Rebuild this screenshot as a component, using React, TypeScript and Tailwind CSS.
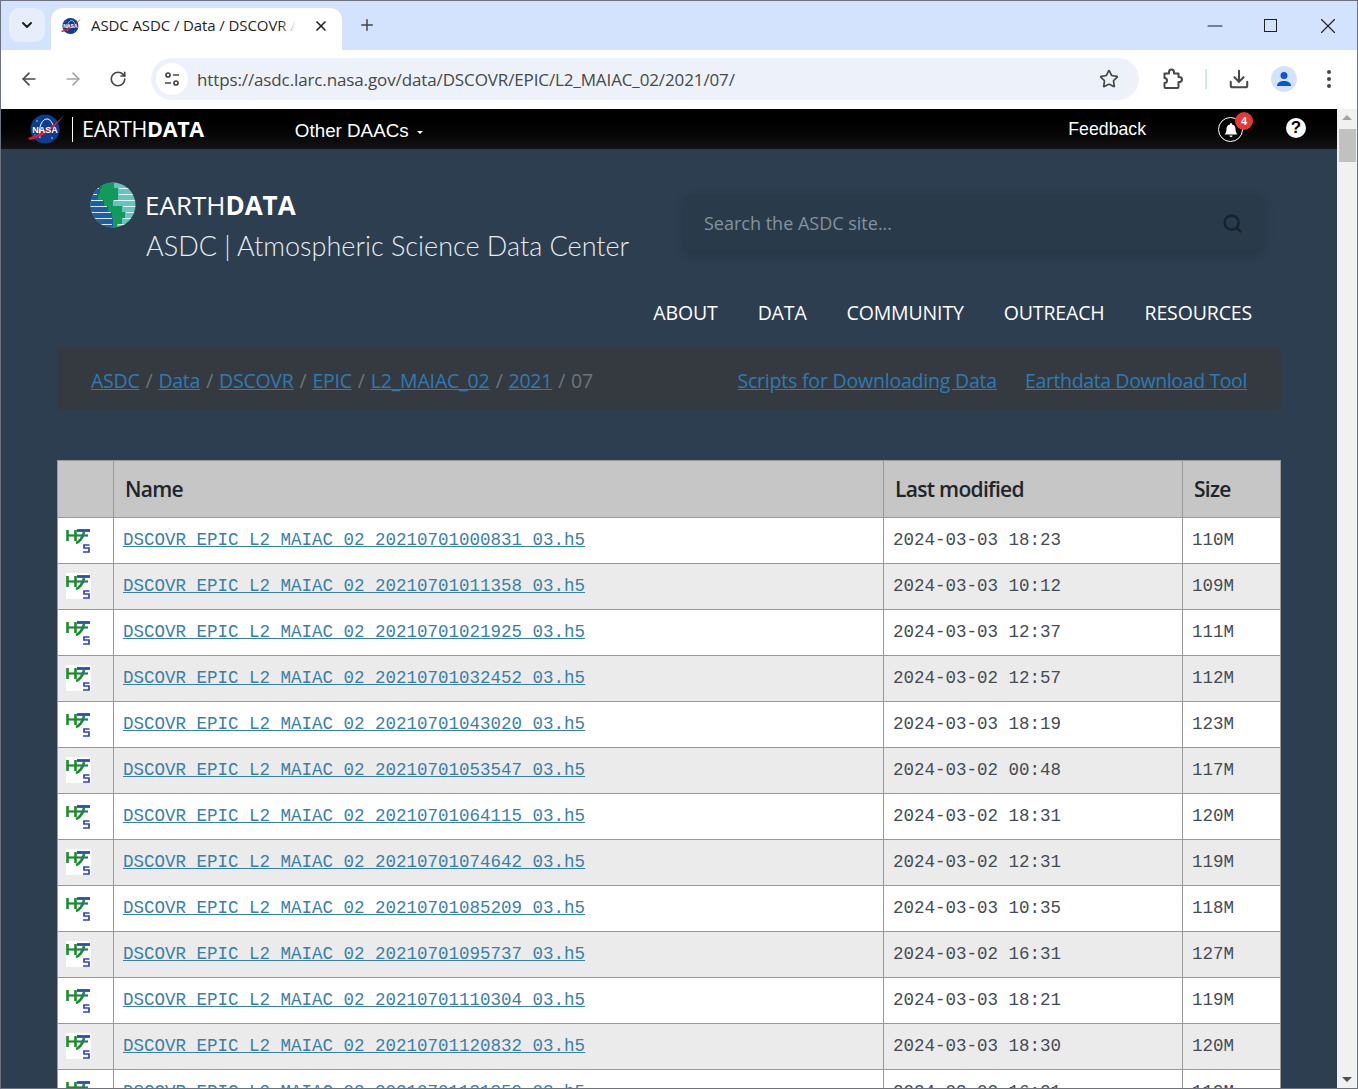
import React from "react";
import { ArrowLeft, ArrowRight, RotateCw, Star, Download, Plus, X, Minus, ChevronDown, Search } from "lucide-react";

const rows: [string, string, string][] = [
  ["20210701000831", "2024-03-03 18:23", "110M"],
  ["20210701011358", "2024-03-03 10:12", "109M"],
  ["20210701021925", "2024-03-03 12:37", "111M"],
  ["20210701032452", "2024-03-02 12:57", "112M"],
  ["20210701043020", "2024-03-03 18:19", "123M"],
  ["20210701053547", "2024-03-02 00:48", "117M"],
  ["20210701064115", "2024-03-02 18:31", "120M"],
  ["20210701074642", "2024-03-02 12:31", "119M"],
  ["20210701085209", "2024-03-03 10:35", "118M"],
  ["20210701095737", "2024-03-02 16:31", "127M"],
  ["20210701110304", "2024-03-03 18:21", "119M"],
  ["20210701120832", "2024-03-03 18:30", "120M"],
  ["20210701131359", "2024-03-02 16:21", "119M"],
];

const sans = "font-['Open_Sans','Noto_Sans',sans-serif]";

function NasaLogo({ size }: { size: number }) {
  return (
    <svg width={size} height={size} viewBox="0 0 36 32" className="shrink-0 overflow-visible">
      <circle cx="17" cy="16" r="14.5" fill="#0b3d91" />
      <circle cx="9" cy="8" r="0.7" fill="#fff" />
      <circle cx="24" cy="25" r="0.7" fill="#fff" />
      <circle cx="7" cy="22" r="0.6" fill="#fff" />
      <path d="M12 25C10 14 14 5 20 6c3 1 4 4 6 8" fill="none" stroke="#fff" strokeWidth="1" />
      <path d="M0 25C13 21 26 13 36 2C28 14 16 24 2 27Z" fill="#d5202e" />
      <text x="17" y="19.500" textAnchor="middle" fontSize="9" fontWeight="700" fill="#fff" fontFamily="Liberation Sans, sans-serif">NASA</text>
    </svg>
  );
}

function EarthLogo() {
  const bands: [number, number, number][] = [
    [0, 12, 24], [6, 10, 28], [12, 8, 28], [18, 14, 23], [24, 18, 32], [30, 22, 35], [36, 23, 32], [42, 23, 27],
  ];
  return (
    <svg width="46" height="46" viewBox="0 0 46 46" className="shrink-0">
      <defs>
        <clipPath id="globe"><circle cx="23" cy="23" r="22.5" /></clipPath>
      </defs>
      <g clipPath="url(#globe)">
        <rect width="46" height="46" fill="#66c3c0" />
        {bands.map(([y, a, b]) => (
          <g key={y}>
            <rect x="0" y={y} width={a} height="6" fill="#1b5ea6" />
            <rect x={a} y={y} width={b - a} height="6" fill="#129a5b" />
            <rect x="0" y={y} width={a - 1} height="1" fill="#fff" opacity="0.85" />
            <rect x={b + 1} y={y} width={46 - b} height="1" fill="#fff" opacity="0.85" />
          </g>
        ))}
      </g>
    </svg>
  );
}

function HdfIcon({ white }: { white: boolean }) {
  return (
    <svg width="25" height="26" viewBox="0 0 25 26" className={white ? "block bg-white mb-[2px]" : "block mb-[2px]"}>
      <path d="M1.500 3v11M9.500 3v11" fill="none" stroke="#1e8a2e" strokeWidth="2.600" />
      <path d="M11 3.500h13" fill="none" stroke="#2a4fa8" strokeWidth="2.800" />
      <path d="M1 8.500h13" fill="none" stroke="#1e8a2e" strokeWidth="2.200" />
      <path d="M14 8.500h8" fill="none" stroke="#2f6aa0" strokeWidth="2.200" />
      <path d="M18 5C17 11 13 15 10 16" fill="none" stroke="#1e8a2e" strokeWidth="2.600" />
      <path d="M23.500 18H18v3h5v4h-6" fill="none" stroke="#3344bb" strokeWidth="1.700" />
    </svg>
  );
}

function Puzzle() {
  return (
    <svg width="22" height="22" viewBox="0 0 22 22" fill="none" stroke="#474747" strokeWidth="2" strokeLinejoin="round">
      <path d="M2.500 5.500H7V4a2.500 2.500 0 0 1 5 0v1.500h4.500V9h1a2.500 2.500 0 0 1 0 5h-1v5a1 1 0 0 1-1 1h-12a1 1 0 0 1-1-1v-4a2.500 2.500 0 0 0 0-5Z" />
    </svg>
  );
}

function Bell() {
  return (
    <div className="relative w-[25px] h-[25px] rounded-full border border-white flex items-center justify-center">
      <svg width="16" height="16" viewBox="0 0 16 16" fill="#fff">
        <path d="M8 1a1 1 0 0 1 1 1v.6A4.500 4.500 0 0 1 12.500 7c0 3 1 4.500 2 5.500H1.500c1-1 2-2.500 2-5.500A4.500 4.500 0 0 1 7 2.600V2a1 1 0 0 1 1-1ZM6.500 13.500h3a1.500 1.500 0 0 1-3 0Z" />
      </svg>
      <span className="absolute -top-[6px] left-[16px] w-[18px] h-[18px] rounded-full bg-[#e53935] text-white text-[11px] leading-[18px] text-center font-['Liberation_Sans',sans-serif] font-bold">4</span>
    </div>
  );
}

export default function App() {
  return (
    <div className={`w-[1358px] h-[1089px] overflow-hidden flex flex-col border border-[#6c7280] bg-white ${sans}`}>
      {/* Tab strip */}
      <div className="h-[49px] shrink-0 bg-[#d3e3fd] flex items-start relative">
        <div className="ml-[8px] mt-[7px] w-[36px] h-[34px] rounded-[10px] bg-[#e6eefb] flex items-center justify-center">
          <ChevronDown size={16} strokeWidth={3} color="#1f1f1f" />
        </div>
        <div className="ml-[6px] mt-[7px] w-[291px] h-[42px] bg-white rounded-t-[12px] flex items-center pl-[10px] pb-[7px] relative">
          <NasaLogo size={20} />
          <div className="ml-[10px] w-[205px] relative overflow-hidden">
            <span className="block whitespace-nowrap text-[15px] text-[#1f1f1f] tracking-[-0.1px]">ASDC ASDC / Data / DSCOVR /</span>
            <div className="absolute right-0 top-0 bottom-0 w-[16px] bg-gradient-to-l from-white to-transparent" />
          </div>
          <X size={16} strokeWidth={2.5} color="#1f1f1f" className="ml-[17px]" />
        </div>
        <Plus size={18} strokeWidth={2} color="#444" className="ml-[16px] mt-[15px]" />
        <div className="ml-auto flex items-center h-[49px] text-[#1f1f1f]">
          <Minus size={24} strokeWidth={1.1} className="mr-[37px]" />
          <div className="w-[13px] h-[13px] border border-[#1f1f1f] mr-[38px]" />
          <X size={26} strokeWidth={1} className="mr-[16px]" />
        </div>
      </div>
      {/* Toolbar */}
      <div className="h-[59px] shrink-0 bg-white flex items-center rounded-t-[8px] pb-[1px]">
        <ArrowLeft size={20} strokeWidth={2} color="#474747" className="ml-[18px]" />
        <ArrowRight size={20} strokeWidth={2} color="#a6a6a6" className="ml-[24px]" />
        <RotateCw size={18} strokeWidth={2.2} color="#474747" className="ml-[26px]" />
        <div className="ml-[24px] w-[988px] h-[42px] rounded-full bg-[#edf2fa] flex items-center pl-[5px]">
          <div className="w-[32px] h-[32px] rounded-full bg-white flex items-center justify-center">
            <svg width="18" height="18" viewBox="0 0 18 18" fill="none" stroke="#474747" strokeWidth="1.7">
              <circle cx="5" cy="5" r="2" />
              <path d="M10 5h6M2 13h6" />
              <circle cx="13" cy="13" r="2" />
            </svg>
          </div>
          <span className="ml-[9px] mt-[1px] text-[17px] text-[#474747] tracking-[-0.12px] whitespace-nowrap">https://asdc.larc.nasa.gov/data/DSCOVR/EPIC/L2_MAIAC_02/2021/07/</span>
          <Star size={20} strokeWidth={2} color="#474747" className="ml-auto mr-[20px]" />
        </div>
        <div className="ml-[23px]"><Puzzle /></div>
        <div className="ml-[21px] w-[2px] h-[20px] bg-[#d3e3fd]" />
        <Download size={22} strokeWidth={2.2} color="#474747" className="ml-[21px]" />
        <div className="ml-[21px] w-[26px] h-[26px] rounded-full bg-[#d3e3fd] flex items-center justify-center">
          <svg width="16" height="16" viewBox="0 0 16 16" fill="#0b57d0">
            <circle cx="8" cy="4.500" r="3.500" />
            <path d="M1 15c0-3.500 3-5 7-5s7 1.500 7 5Z" />
          </svg>
        </div>
        <div className="ml-[30px] flex flex-col gap-[3px]">
          <div className="w-[4px] h-[4px] rounded-full bg-[#474747]" />
          <div className="w-[4px] h-[4px] rounded-full bg-[#474747]" />
          <div className="w-[4px] h-[4px] rounded-full bg-[#474747]" />
        </div>
      </div>

      {/* Viewport */}
      <div className="flex-1 min-h-0 flex overflow-hidden">
        <div className="w-[1336px] shrink-0 bg-[#2c3e50] flex flex-col overflow-hidden">
          {/* Black top bar */}
          <div className="h-[40px] shrink-0 bg-gradient-to-b from-[#000000] to-[#141414] flex items-center text-white pl-[27px]">
            <NasaLogo size={36} />
            <div className="ml-[8px] w-[1px] h-[25px] bg-white" />
            <span className="ml-[9px] text-[21.5px] tracking-[-0.3px]">EARTH<b className="font-bold">DATA</b></span>
            <span className="ml-[91px] mt-[5px] text-[18.8px] font-['Liberation_Sans',sans-serif]">Other DAACs</span>
            <span className="ml-[8px] mt-[7px] w-0 h-0 border-x-[3px] border-x-transparent border-t-[3px] border-t-white" />
            <span className="ml-auto text-[17.7px] font-['Liberation_Sans',sans-serif]">Feedback</span>
            <div className="ml-[72px] mt-[1px]"><Bell /></div>
            <div className="ml-[43px] mr-[31px] mb-[2px] w-[20px] h-[20px] rounded-full bg-white text-black flex items-center justify-center font-['Liberation_Sans',sans-serif] font-bold text-[17px]">?</div>
          </div>

          <div className="pl-[56px] w-[1280px] flex flex-col">
            {/* Brand + search */}
            <div className="flex items-start justify-between">
              <div className="pl-[33px] pt-[33px] pb-[3px]">
                <div className="flex items-center h-[46px]">
                  <EarthLogo />
                  <span className="ml-[9px] text-[26px] text-white leading-none">EARTH<b className="font-bold">DATA</b></span>
                </div>
                <div className="ml-[56px] text-[27px] leading-[36px] text-[#e7ecf0] font-light font-['Lato',sans-serif] whitespace-nowrap">ASDC | Atmospheric Science Data Center</div>
              </div>
              <div className="mt-[46px] mr-[18px] w-[579px] h-[55px] rounded-[5px] bg-[#293a4a] shadow-[0_4px_12px_rgba(0,0,0,0.15)] flex items-center pl-[20px] pr-[20px] pt-[2px]">
                <span className="text-[18px] text-[#84929f]">Search the ASDC site...</span>
                <Search size={21} strokeWidth={3} color="#17232e" className="ml-auto" />
              </div>
            </div>
            {/* Nav */}
            <nav className="flex justify-end gap-[40px] pr-[29px] mt-[33px] text-[19.5px] text-white tracking-[-0.15px] leading-[26px]">
              <span>ABOUT</span>
              <span>DATA</span>
              <span>COMMUNITY</span>
              <span>OUTREACH</span>
              <span>RESOURCES</span>
            </nav>
            {/* Breadcrumb */}
            <div className="mt-[22px] h-[62px] rounded-[5px] bg-[#343a40] flex items-center pl-[34px] pr-[34px] pt-[3px] text-[19.5px] text-[#6c757d] tracking-[-0.25px] whitespace-nowrap">
              <a className="underline text-[#2f7ab5]">ASDC</a><span className="mx-[6px]">/</span>
              <a className="underline text-[#2f7ab5]">Data</a><span className="mx-[6px]">/</span>
              <a className="underline text-[#2f7ab5]">DSCOVR</a><span className="mx-[6px]">/</span>
              <a className="underline text-[#2f7ab5]">EPIC</a><span className="mx-[6px]">/</span>
              <a className="underline text-[#2f7ab5] tracking-[-0.15px]">L2_MAIAC_02</a><span className="mx-[6px]">/</span>
              <a className="underline text-[#2f7ab5]">2021</a><span className="mx-[6px]">/</span>
              <span>07</span>
              <a className="underline text-[#2f7ab5] ml-auto tracking-[-0.2px]">Scripts for Downloading Data</a>
              <a className="underline text-[#2f7ab5] ml-[28px] tracking-[-0.38px]">Earthdata Download Tool</a>
            </div>
            {/* Table */}
            <table className="mt-[50px] w-[1223px] table-fixed border-collapse bg-white">
              <colgroup>
                <col className="w-[56px]" />
                <col className="w-[770px]" />
                <col className="w-[299px]" />
                <col className="w-[98px]" />
              </colgroup>
              <thead>
                <tr className="h-[57px] bg-[#c6c6c6] text-[#212529] text-[21px] font-semibold tracking-[-0.7px]">
                  <th className="border border-[#999999]" />
                  <th className="border border-[#999999] text-left pl-[11px] pt-[2px] font-semibold">Name</th>
                  <th className="border border-[#999999] text-left pl-[11px] pt-[2px] font-semibold">Last modified</th>
                  <th className="border border-[#999999] text-left pl-[11px] pt-[2px] font-semibold">Size</th>
                </tr>
              </thead>
              <tbody className="font-['Liberation_Mono',monospace] text-[17.5px] text-[#444b52]">
                {rows.map(([stamp, date, size], i) => (
                  <tr key={stamp} className={i % 2 ? "h-[46px] bg-[#ebebeb]" : "h-[46px] bg-white"}>
                    <td className="border border-[#999999] pl-[8px]"><HdfIcon white={i % 2 === 1} /></td>
                    <td className="border border-[#999999] pl-[9px]">
                      <a className="underline text-[#3a7fa8] whitespace-nowrap">DSCOVR_EPIC_L2_MAIAC_02_{stamp}_03.h5</a>
                    </td>
                    <td className="border border-[#999999] pl-[9px]">{date}</td>
                    <td className="border border-[#999999] pl-[9px]">{size}</td>
                  </tr>
                ))}
              </tbody>
            </table>
          </div>
        </div>
        {/* Scrollbar */}
        <div className="w-[20px] shrink-0 bg-[#f1f1f1] flex flex-col items-center">
          <div className="mt-[6px] w-0 h-0 border-x-[5px] border-x-transparent border-b-[5px] border-b-[#a3a3a3]" />
          <div className="mt-[9px] w-[17px] h-[33px] bg-[#c1c1c1]" />
          <div className="mt-auto mb-[6px] w-0 h-0 border-x-[5px] border-x-transparent border-t-[5px] border-t-[#505050]" />
        </div>
      </div>
    </div>
  );
}
